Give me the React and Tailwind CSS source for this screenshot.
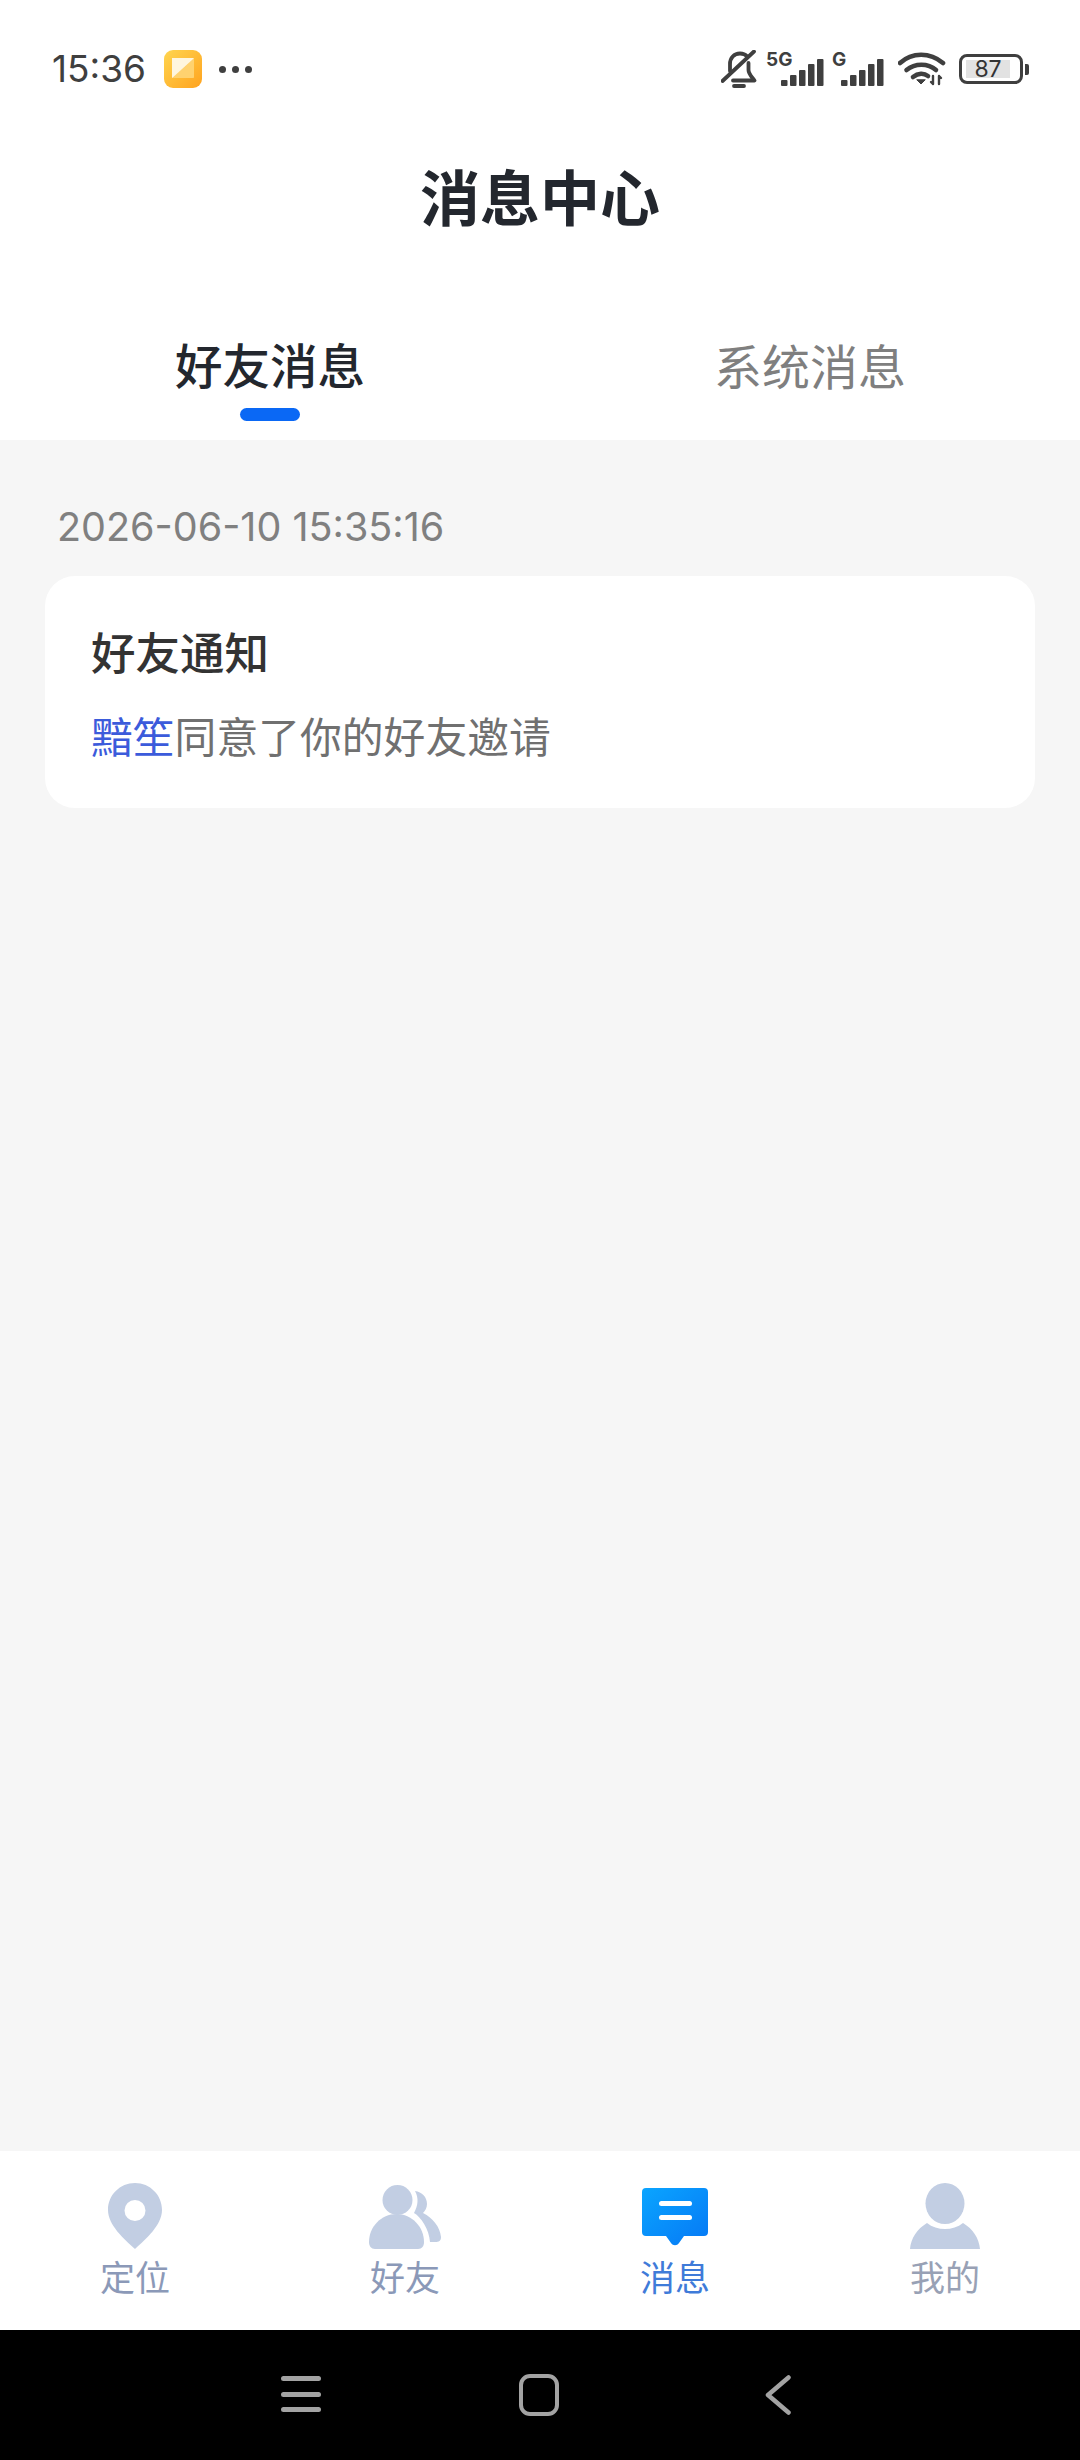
const cjk = { fontFamily: '"Noto Sans CJK SC", sans-serif' };

function AppBadge() {
  return (
    <svg width="38" height="38" viewBox="0 0 38 38">
      <defs>
        <linearGradient id="badge" x1="0" y1="0" x2="1" y2="1">
          <stop offset="0" stopColor="#ffd54f" />
          <stop offset="1" stopColor="#ffa31f" />
        </linearGradient>
      </defs>
      <rect width="38" height="38" rx="9" fill="url(#badge)" />
      <rect x="8" y="8" width="22" height="20" rx="1.5" fill="#ffe9b0" />
      <path d="M8 28 L30 8 V28 Z" fill="#ffc95a" opacity=".75" />
      <path d="M8 8 H30 L8 28 Z" fill="#fff6df" />
    </svg>
  );
}

function MutedBell() {
  return (
    <svg width="36" height="38" viewBox="0 0 36 38" fill="none" stroke="#3f3f3f" strokeWidth="3.8" strokeLinecap="round" strokeLinejoin="round">
      <path d="M9 21 V14 C9 8 13 3.5 19 3.5 C22 3.5 24.5 4.6 26.3 6.5" />
      <path d="M27.5 13 V20 C27.5 24 31 27 33.5 30.5 H12" />
      <path d="M1.5 31 L33 1.5" />
      <path d="M13 36 H23" />
    </svg>
  );
}

function Signal({ label, width }) {
  const bars = [
    [0, 22, 6],
    [9, 17, 11],
    [18, 12, 16],
    [27, 6, 22],
    [36, 1, 27],
  ];
  return (
    <div className="relative h-[34px]" style={{ width }}>
      <span className="absolute left-0 top-[-3px] text-[19px] leading-[22px] font-bold text-[#3f3f3f]" style={{ fontFamily: '"Inter", sans-serif' }}>{label}</span>
      <svg className="absolute right-0 bottom-0" width="44" height="28" viewBox="0 0 44 28" fill="#3f3f3f">
        {bars.map(([x, y, h]) => (
          <rect key={x} x={x} y={y} width="6.5" height={h} rx="1" />
        ))}
      </svg>
    </div>
  );
}

function Wifi() {
  return (
    <svg width="48" height="34" viewBox="0 0 48 34" fill="none" stroke="#3f3f3f" strokeWidth="4.6" strokeLinecap="round">
      <path d="M2 11 C14 0 32 0 45 11" />
      <path d="M8.5 18 C17 11 30 11 38 18" />
      <path d="M15 25 C20 21 26 21 30 24" />
      <path d="M19 28 L23 32 L27 28 Z" fill="#3f3f3f" strokeWidth="1" />
      <path d="M35 24 V32 M33 30 L35 32 M41 32 V24 M41 24 L43 26" strokeWidth="2.4" />
    </svg>
  );
}

function Battery() {
  return (
    <div className="flex items-center gap-[2px]">
      <div className="flex h-[30px] w-[64px] items-center justify-center rounded-[8px] border-[3px] border-[#3f3f3f] p-[3px]">
        <div className="flex h-full w-[44px] -translate-x-[3px] items-center justify-center bg-[#e2e2e2] text-[23px] leading-none text-[#333]" style={{ fontFamily: '"Inter", sans-serif' }}>87</div>
      </div>
      <div className="h-[11px] w-[4px] rounded-r-[2px] bg-[#3f3f3f]" />
    </div>
  );
}

function PinIcon() {
  return (
    <svg width="54" height="66" viewBox="0 0 54 66">
      <path fillRule="evenodd" fill="#c2cee3" d="M27 0 C12 0 0 12 0 27 C0 42 16 56 27 66 C38 56 54 42 54 27 C54 12 42 0 27 0 Z M27 17 A10.5 10.5 0 1 1 27 38 A10.5 10.5 0 1 1 27 17 Z" />
    </svg>
  );
}

function FriendsIcon() {
  return (
    <svg width="72" height="64" viewBox="0 0 72 64" fill="#c2cee3">
      <circle cx="28.5" cy="15" r="15" />
      <path d="M0 57 C0 42 12 29 27.5 29 C43 29 55 42 55 57 C55 61 53 64 49 64 H6 C2 64 0 61 0 57 Z" />
      <path d="M46 6 C53 7 58 12 58 19 C58 23 56 26 54 28 C64 33 71 42 72 52 C72 56 70 57 66 57 H61 C60 44 52 32 45 28 C49 21 50 13 46 6 Z" />
    </svg>
  );
}

function MessageIcon() {
  return (
    <svg width="66" height="58" viewBox="0 0 66 58">
      <defs>
        <linearGradient id="msg" x1="0" y1="0" x2="1" y2="1">
          <stop offset="0" stopColor="#0aa5ff" />
          <stop offset="1" stopColor="#0678f5" />
        </linearGradient>
      </defs>
      <path fill="url(#msg)" d="M4 0 H62 A4 4 0 0 1 66 4 V44 A4 4 0 0 1 62 48 H42 L37 55 C35 58 31 58 29 55 L24 48 H4 A4 4 0 0 1 0 44 V4 A4 4 0 0 1 4 0 Z" />
      <rect x="17" y="13" width="33" height="5" rx="2.5" fill="#fff" />
      <rect x="17" y="27" width="33" height="5" rx="2.5" fill="#fff" />
    </svg>
  );
}

function PersonIcon() {
  return (
    <svg width="70" height="66" viewBox="0 0 70 66" fill="#c2cee3">
      <ellipse cx="35" cy="20.5" rx="19.5" ry="20.5" />
      <path d="M0 66 C1 55 7 46 17 40 C27 48 43 48 53 40 C63 46 69 55 70 66 Z" />
    </svg>
  );
}

const navItems = [
  { label: '定位', icon: <PinIcon />, color: 'text-[#8b99b8]' },
  { label: '好友', icon: <FriendsIcon />, color: 'text-[#8b99b8]' },
  { label: '消息', icon: <MessageIcon />, color: 'text-[#3f7bd9]' },
  { label: '我的', icon: <PersonIcon />, color: 'text-[#98a1b5]' },
];

export default function App() {
  return (
    <div className="flex h-[2460px] w-[1080px] flex-col overflow-hidden bg-[#f6f6f6]" style={cjk}>
      <header className="bg-white">
        <div className="flex h-[98px] items-end justify-between pb-[10px] pl-[52px] pr-[51px]">
          <div className="flex items-center">
            <span className="text-[37px] leading-[38px] text-[#3f3f3f]" style={{ fontFamily: '"Inter", sans-serif' }}>15:36</span>
            <span className="ml-[18px]"><AppBadge /></span>
            <div className="ml-[17px] flex gap-[6px]">
              <span className="h-[7px] w-[7px] rounded-full bg-[#3f3f3f]" />
              <span className="h-[7px] w-[7px] rounded-full bg-[#3f3f3f]" />
              <span className="h-[7px] w-[7px] rounded-full bg-[#3f3f3f]" />
            </div>
          </div>
          <div className="flex items-center">
            <MutedBell />
            <span className="ml-[9px]"><Signal label="5G" width={59} /></span>
            <span className="ml-[7px]"><Signal label="G" width={53} /></span>
            <span className="ml-[13px]"><Wifi /></span>
            <span className="ml-[13px]"><Battery /></span>
          </div>
        </div>
        <h1 className="mt-[59px] text-center text-[60px] leading-[76px] font-bold text-[#23272e]">消息中心</h1>
        <div className="mt-[99px] flex h-[108px]">
          <div className="flex w-[540px] flex-col items-center">
            <span className="text-[47.5px] leading-[64px] font-medium text-[#23272e]">好友消息</span>
            <span className="mt-[12px] h-[13px] w-[60px] rounded-full bg-[#0a68f5]" />
          </div>
          <div className="flex w-[540px] justify-center">
            <span className="text-[48px] leading-[64px] text-[#7f7f7f]">系统消息</span>
          </div>
        </div>
      </header>

      <main className="flex-1 px-[45px]">
        <p className="mt-[62px] ml-[12px] text-[39.5px] leading-[50px] text-[#808080]" style={{ fontFamily: '"Inter", sans-serif' }}>2026-06-10 15:35:16</p>
        <section className="mt-[24px] h-[232px] rounded-[30px] bg-white px-[46px] pt-[45px]">
          <h2 className="text-[44.5px] leading-[60px] font-medium text-[#333333]">好友通知</h2>
          <p className="mt-[24px] text-[41.8px] leading-[60px] text-[#707070]">
            <span className="text-[#3b5bdb]">黯笙</span>同意了你的好友邀请
          </p>
        </section>
      </main>

      <nav className="flex h-[179px] bg-white pt-[32px]">
        {navItems.map((item, i) => (
          <div key={item.label} className="flex w-[270px] flex-col items-center">
            <div className={`flex h-[66px] ${i === 2 ? 'items-start pt-[5px]' : 'items-end'}`}>{item.icon}</div>
            <span className={`mt-[4px] text-[35px] leading-[46px] ${item.color}`}>{item.label}</span>
          </div>
        ))}
      </nav>

      <div className="flex h-[130px] items-center justify-center bg-black pr-[8px]">
        <svg width="40" height="38" viewBox="0 0 40 38" fill="#a3a3a3">
          <rect x="0" y="0" width="40" height="5" rx="2.5" />
          <rect x="0" y="16" width="40" height="5" rx="2.5" />
          <rect x="0" y="31" width="40" height="5" rx="2.5" />
        </svg>
        <svg className="ml-[198px]" width="40" height="42" viewBox="0 0 40 42" fill="none">
          <rect x="2" y="2" width="36" height="38" rx="9" stroke="#a3a3a3" strokeWidth="4" />
        </svg>
        <svg className="ml-[206px]" width="26" height="40" viewBox="0 0 26 40" fill="none">
          <path d="M23.5 2.5 L3 20 L23.5 37.5" stroke="#a3a3a3" strokeWidth="4.5" strokeLinecap="round" strokeLinejoin="round" />
        </svg>
      </div>
    </div>
  );
}
